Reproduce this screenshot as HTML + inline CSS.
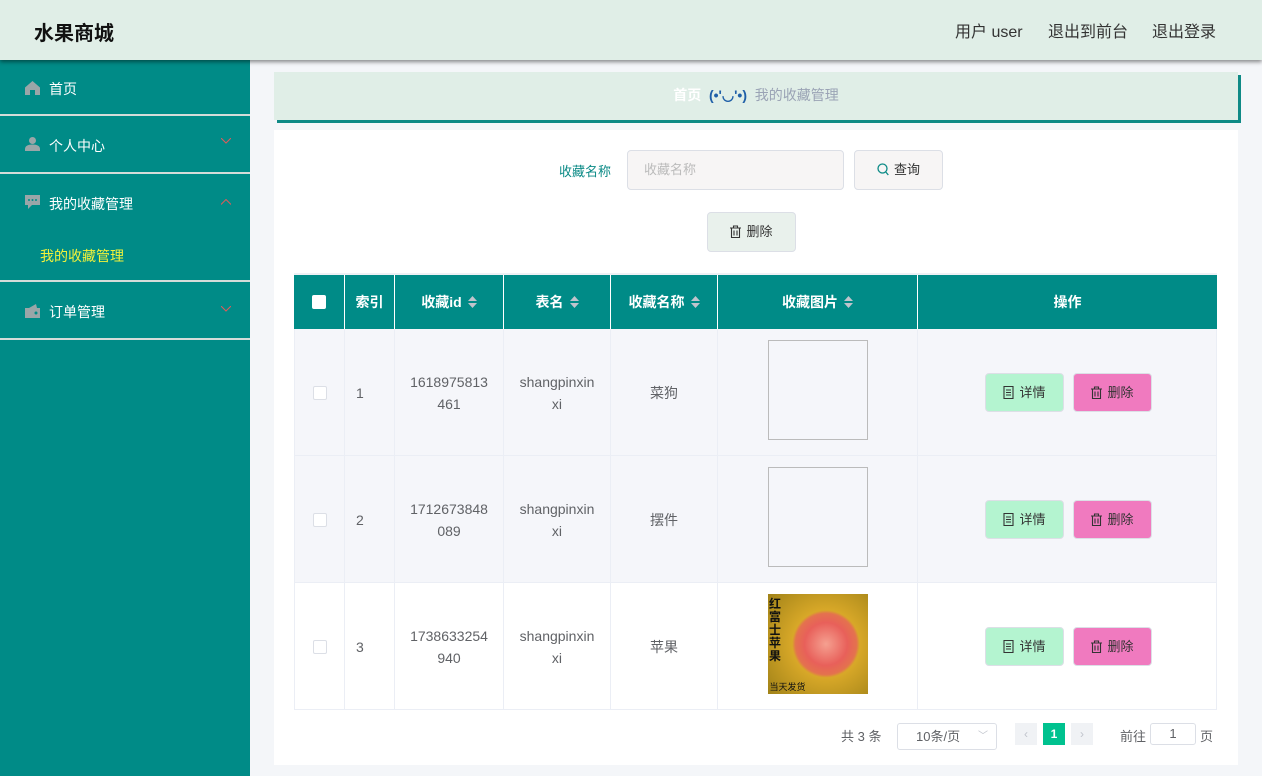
<!DOCTYPE html>
<html><head><meta charset="utf-8"><style>
*{margin:0;padding:0;box-sizing:border-box}
body{width:1262px;height:776px;overflow:hidden;background:#f4f6f9;font-family:"Liberation Sans","Noto Sans CJK SC",sans-serif;font-size:14px;color:#606266;position:relative}
.a{position:absolute}
.hdr{left:0;top:0;width:1262px;height:60px;background:#e0eee7;box-shadow:0 2px 4px rgba(0,0,0,.45);z-index:3}
.side{left:0;top:60px;width:250px;height:716px;background:#008b87}
.mi{position:absolute;left:0;width:250px;color:#fff;font-size:14px}
.sep{position:absolute;left:0;width:250px;height:2px;background:#d4dcd9}
.ic{position:absolute;left:25px;width:15px;height:14px;fill:#9aa6a8}
.chev{position:absolute;left:221px;width:10px;height:6px}
.crumb{left:274px;top:72px;width:964px;height:48px;background:#e0eee7;box-shadow:3px 3px 0 #0f8a86;font-size:14px;text-align:center;line-height:46px}
.panel{left:274px;top:130px;width:964px;height:635px;background:#fff}
.btn{position:absolute;border:1px solid #dcdfe6;border-radius:4px;font-size:13px;color:#333;text-align:center}
.th{position:absolute;top:275px;height:54px;background:#008b87;color:#fff;font-weight:bold;font-size:14px;text-align:center;line-height:54px;border-right:1px solid #fff}
.sort{display:inline-block;width:9px;height:12px;vertical-align:-1px;margin-left:6px}
.row{position:absolute;left:294px;width:923px;height:127px;border-bottom:1px solid #ebeef5}
.td{position:absolute;top:0;height:127px;border-right:1px solid #ebeef5;display:flex;align-items:center;justify-content:center;text-align:center;line-height:22px;font-size:14px;color:#606266}
.cb{width:14px;height:14px;border:1px solid #dcdfe6;background:#fff;border-radius:2px}
.ob{position:absolute;top:44px;width:79px;height:39px;border-radius:4px;border:1px solid #dcdfe6;font-size:13px;color:#333;line-height:37px;text-align:center}
.img{width:100px;height:100px;border:1px solid #bbb;margin-top:-6px}
.ti{display:inline-block;width:11px;height:13px;vertical-align:-2px;margin-right:5px}
</style></head><body>
<div class="a hdr">
 <div class="a" style="left:34px;top:17px;font-size:20px;font-weight:bold;color:#111">水果商城</div>
 <div class="a" style="left:955px;top:18px;font-size:16px;color:#333">用户 user</div>
 <div class="a" style="left:1048px;top:18px;font-size:16px;color:#333">退出到前台</div>
 <div class="a" style="left:1152px;top:18px;font-size:16px;color:#333">退出登录</div>
</div>
<div class="a side">
 <div class="mi" style="top:0;height:54px"><svg class="ic" style="top:21px" viewBox="0 0 15 14"><path d="M7.5 0L0 6.5V14h5V9h5v5h5V6.5z"/></svg><span class="a" style="left:49px;top:19px">首页</span></div>
 <div class="sep" style="top:54px"></div>
 <div class="mi" style="top:56px;height:56px"><svg class="ic" style="top:21px" viewBox="0 0 15 14"><circle cx="7.5" cy="3.5" r="3.5"/><path d="M0 14v-2c0-3 3-4.5 7.5-4.5S15 9 15 12v2z"/></svg><span class="a" style="left:49px;top:20px">个人中心</span><svg class="chev" style="top:22px" viewBox="0 0 10 6"><path d="M0 0l5 5 5-5" fill="none" stroke="#e05a5a"/></svg></div>
 <div class="sep" style="top:112px"></div>
 <div class="mi" style="top:114px;height:56px"><svg class="ic" style="top:21px" viewBox="0 0 15 14"><path d="M0 0h15v10H7l-4 4v-4H0z"/><circle cx="4" cy="5" r="1" fill="#008b87"/><circle cx="7.5" cy="5" r="1" fill="#008b87"/><circle cx="11" cy="5" r="1" fill="#008b87"/></svg><span class="a" style="left:49px;top:20px">我的收藏管理</span><svg class="chev" style="top:25px" viewBox="0 0 10 6"><path d="M0 5.5l5-5 5 5" fill="none" stroke="#e05a5a"/></svg></div>
 <div class="mi" style="top:170px;height:50px;color:#f2f23a"><span class="a" style="left:40px;top:16px">我的收藏管理</span></div>
 <div class="sep" style="top:220px"></div>
 <div class="mi" style="top:222px;height:56px"><svg class="ic" style="top:22px" viewBox="0 0 15 14"><path d="M0 4h15v10H0z"/><path d="M4 4l7-4 1 4z"/><circle cx="11" cy="9" r="1.5" fill="#008b87"/></svg><span class="a" style="left:49px;top:20px">订单管理</span><svg class="chev" style="top:24px" viewBox="0 0 10 6"><path d="M0 0l5 5 5-5" fill="none" stroke="#e05a5a"/></svg></div>
 <div class="sep" style="top:278px"></div>
</div>
<div class="a crumb"><span style="color:#fff;font-weight:bold">首页</span>&nbsp;&nbsp;<b style="color:#1f5fa8">(•'◡'•)</b>&nbsp;&nbsp;<span style="color:#9aa3b5">我的收藏管理</span></div>
<div class="a panel"></div>
<div class="a" style="left:559px;top:161px;font-size:13px;color:#0b8a86">收藏名称</div>
<div class="btn" style="left:627px;top:150px;width:217px;height:40px;background:#f7f5f5;text-align:left;padding-left:16px;line-height:38px;color:#bbb">收藏名称</div>
<div class="btn" style="left:854px;top:150px;width:89px;height:40px;background:#f7f5f5;line-height:38px"><svg class="ti" viewBox="0 0 12 13" style="width:12px"><circle cx="5.5" cy="5.5" r="4.5" fill="none" stroke="#0b8a86" stroke-width="1.3"/><path d="M8.8 9l2.5 3" stroke="#0b8a86" stroke-width="1.3"/></svg>查询</div>
<div class="btn" style="left:707px;top:212px;width:89px;height:40px;background:#e9f1ec;line-height:38px"><svg class="ti" viewBox="0 0 11 13"><path d="M0 3h11M3.5 3V1h4v2M1.5 3.5v9h8v-9M4 5.5v5M7 5.5v5" fill="none" stroke="#333" stroke-width="1.1"/></svg>删除</div>
<div class="a" style="left:294px;top:273px;width:923px;height:2px;background:#eef0f4"></div>
<div class="th" style="left:294px;width:51px"><span style="display:inline-block;width:14px;height:14px;background:#fff;border-radius:2px;vertical-align:-2px"></span></div>
<div class="th" style="left:345px;width:50px">索引</div>
<div class="th" style="left:395px;width:109px">收藏id<svg class="sort" viewBox="0 0 9 12"><path d="M4.5 0L9 5H0zM0 7h9l-4.5 5z" fill="#c0c4cc"/></svg></div>
<div class="th" style="left:504px;width:107px">表名<svg class="sort" viewBox="0 0 9 12"><path d="M4.5 0L9 5H0zM0 7h9l-4.5 5z" fill="#c0c4cc"/></svg></div>
<div class="th" style="left:611px;width:107px">收藏名称<svg class="sort" viewBox="0 0 9 12"><path d="M4.5 0L9 5H0zM0 7h9l-4.5 5z" fill="#c0c4cc"/></svg></div>
<div class="th" style="left:718px;width:200px">收藏图片<svg class="sort" viewBox="0 0 9 12"><path d="M4.5 0L9 5H0zM0 7h9l-4.5 5z" fill="#c0c4cc"/></svg></div>
<div class="th" style="left:918px;width:299px;border-right:0">操作</div>

<div class="row" style="top:329px;background:#f5f6fa;border-left:1px solid #ebeef5;border-right:1px solid #ebeef5">
 <div class="td" style="left:0;width:50px"><div class="cb"></div></div>
 <div class="td" style="left:50px;width:50px;justify-content:flex-start;padding-left:11px">1</div>
 <div class="td" style="left:100px;width:109px">1618975813<br>461</div>
 <div class="td" style="left:209px;width:107px">shangpinxin<br>xi</div>
 <div class="td" style="left:316px;width:107px">菜狗</div>
 <div class="td" style="left:423px;width:200px"><div class="img"></div></div>
 <div class="ob" style="left:690px;background:#b4f4d0"><svg class="ti" viewBox="0 0 11 13"><path d="M1 .5h9v12H1zM3 4h5M3 6.5h5M3 9h5" fill="none" stroke="#333" stroke-width="1.1"/></svg>详情</div>
 <div class="ob" style="left:778px;background:#f07abf"><svg class="ti" viewBox="0 0 11 13"><path d="M0 3h11M3.5 3V1h4v2M1.5 3.5v9h8v-9M4 5.5v5M7 5.5v5" fill="none" stroke="#333" stroke-width="1.1"/></svg>删除</div>
</div>
<div class="row" style="top:456px;background:#f5f6fa;border-left:1px solid #ebeef5;border-right:1px solid #ebeef5">
 <div class="td" style="left:0;width:50px"><div class="cb"></div></div>
 <div class="td" style="left:50px;width:50px;justify-content:flex-start;padding-left:11px">2</div>
 <div class="td" style="left:100px;width:109px">1712673848<br>089</div>
 <div class="td" style="left:209px;width:107px">shangpinxin<br>xi</div>
 <div class="td" style="left:316px;width:107px">摆件</div>
 <div class="td" style="left:423px;width:200px"><div class="img"></div></div>
 <div class="ob" style="left:690px;background:#b4f4d0"><svg class="ti" viewBox="0 0 11 13"><path d="M1 .5h9v12H1zM3 4h5M3 6.5h5M3 9h5" fill="none" stroke="#333" stroke-width="1.1"/></svg>详情</div>
 <div class="ob" style="left:778px;background:#f07abf"><svg class="ti" viewBox="0 0 11 13"><path d="M0 3h11M3.5 3V1h4v2M1.5 3.5v9h8v-9M4 5.5v5M7 5.5v5" fill="none" stroke="#333" stroke-width="1.1"/></svg>删除</div>
</div>
<div class="row" style="top:583px;background:#fff;border-left:1px solid #ebeef5;border-right:1px solid #ebeef5">
 <div class="td" style="left:0;width:50px"><div class="cb"></div></div>
 <div class="td" style="left:50px;width:50px;justify-content:flex-start;padding-left:11px">3</div>
 <div class="td" style="left:100px;width:109px">1738633254<br>940</div>
 <div class="td" style="left:209px;width:107px">shangpinxin<br>xi</div>
 <div class="td" style="left:316px;width:107px">苹果</div>
 <div class="td" style="left:423px;width:200px"><div style="width:100px;height:100px;position:relative;margin-top:-6px;background:radial-gradient(circle at 58% 50%,#f5a090 0,#e8605a 28%,#e4724e 40%,#d8a828 44%,#a08218 100%);">
  <span style="position:absolute;left:1px;top:4px;font-size:12px;line-height:13px;width:13px;color:#111;font-weight:bold">红富士苹果</span>
  <span style="position:absolute;left:2px;top:82px;font-size:9px;color:#111">当天发货</span></div></div>
 <div class="ob" style="left:690px;background:#b4f4d0"><svg class="ti" viewBox="0 0 11 13"><path d="M1 .5h9v12H1zM3 4h5M3 6.5h5M3 9h5" fill="none" stroke="#333" stroke-width="1.1"/></svg>详情</div>
 <div class="ob" style="left:778px;background:#f07abf"><svg class="ti" viewBox="0 0 11 13"><path d="M0 3h11M3.5 3V1h4v2M1.5 3.5v9h8v-9M4 5.5v5M7 5.5v5" fill="none" stroke="#333" stroke-width="1.1"/></svg>删除</div>
</div>

<div class="a" style="left:841px;top:726px;font-size:13px">共 3 条</div>
<div class="a" style="left:897px;top:723px;width:100px;height:27px;border:1px solid #dcdfe6;border-radius:3px;font-size:13px;line-height:25px;padding-left:18px">10条/页<span style="position:absolute;right:8px;top:0;color:#c0c4cc;font-size:10px">﹀</span></div>
<div class="a" style="left:1015px;top:723px;width:22px;height:22px;background:#f0f2f5;color:#c0c4cc;text-align:center;line-height:22px;font-size:12px">‹</div>
<div class="a" style="left:1043px;top:723px;width:22px;height:22px;background:#00c28f;color:#fff;text-align:center;line-height:22px;font-size:12px;font-weight:bold">1</div>
<div class="a" style="left:1071px;top:723px;width:22px;height:22px;background:#f0f2f5;color:#c0c4cc;text-align:center;line-height:22px;font-size:12px">›</div>
<div class="a" style="left:1120px;top:726px;font-size:13px">前往</div>
<div class="a" style="left:1150px;top:723px;width:46px;height:22px;border:1px solid #dcdfe6;border-radius:3px;text-align:center;line-height:20px;font-size:13px">1</div>
<div class="a" style="left:1200px;top:726px;font-size:13px">页</div>
</body></html>
